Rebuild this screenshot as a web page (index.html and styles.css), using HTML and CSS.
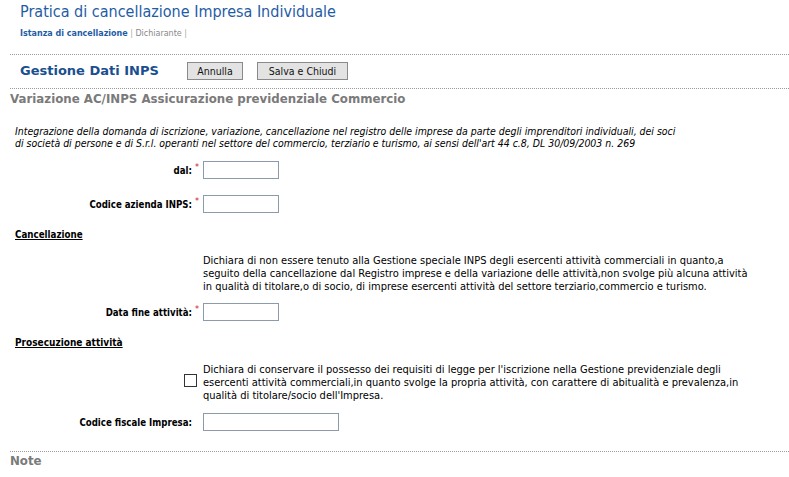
FILE: index.html
```html
<!DOCTYPE html>
<html lang="it">
<head>
<meta charset="utf-8">
<title>Pratica di cancellazione Impresa Individuale</title>
<link rel="stylesheet" href="styles.css">
</head>
<body>
<div class="page">
  <h1 class="title">Pratica di cancellazione Impresa Individuale</h1>
  <div class="crumbs"><a class="crumb-active">Istanza di cancellazione</a> <span class="sep">|</span> <span class="crumb">Dichiarante</span> <span class="sep">|</span></div>
  <div class="rule"></div>
  <div class="toolbar">
    <h2 class="section-title">Gestione Dati INPS</h2>
    <button class="btn btn-cancel">Annulla</button>
    <button class="btn btn-save">Salva e Chiudi</button>
  </div>
  <div class="rule rule-tight"></div>
  <h3 class="group-title">Variazione AC/INPS Assicurazione previdenziale Commercio</h3>

  <div class="form">
    <p class="intro">Integrazione della domanda di iscrizione, variazione, cancellazione nel registro delle imprese da parte degli imprenditori individuali, dei soci<br>di società di persone e di S.r.l. operanti nel settore del commercio, terziario e turismo, ai sensi dell'art 44 c.8, DL 30/09/2003 n. 269</p>

    <div class="row row-dal">
      <label class="lbl">dal:</label><span class="req">*</span>
      <input class="inp inp-short" type="text">
    </div>
    <div class="row row-cod">
      <label class="lbl">Codice azienda INPS:</label><span class="req">*</span>
      <input class="inp inp-short" type="text">
    </div>

    <h4 class="sub">Cancellazione</h4>
    <div class="row row-text1">
      <span class="lbl"></span><span class="req"></span>
      <p class="decl">Dichiara di non essere tenuto alla Gestione speciale INPS degli esercenti attività commerciali in quanto,a<br>seguito della cancellazione dal Registro imprese e della variazione delle attività,non svolge più alcuna attività<br>in qualità di titolare,o di socio, di imprese esercenti attività del settore terziario,commercio e turismo.</p>
    </div>
    <div class="row row-fine">
      <label class="lbl">Data fine attività:</label><span class="req">*</span>
      <input class="inp inp-short" type="text">
    </div>

    <h4 class="sub sub2">Prosecuzione attività</h4>
    <div class="row row-text2">
      <span class="chk-cell"><span class="chk"></span></span>
      <p class="decl">Dichiara di conservare il possesso dei requisiti di legge per l'iscrizione nella Gestione previdenziale degli<br>esercenti attività commerciali,in quanto svolge la propria attività, con carattere di abitualità e prevalenza,in<br>qualità di titolare/socio dell'Impresa.</p>
    </div>
    <div class="row row-cf">
      <label class="lbl">Codice fiscale Impresa:</label><span class="req"></span>
      <input class="inp inp-long" type="text">
    </div>
  </div>

  <div class="rule rule-note"></div>
  <h3 class="group-title note">Note</h3>
</div>
</body>
</html>
```
FILE: styles.css
```css
html, body {
  margin: 0;
  padding: 0;
  background: #fff;
}
body {
  font-family: "DejaVu Sans Condensed", "DejaVu Sans", Verdana, sans-serif;
  font-size: 11px;
  color: #000;
  overflow: hidden;
}
.page {
  padding: 2px 0 0 10px;
}
.title {
  margin: 0 0 0 10px;
  font-family: "DejaVu Sans Condensed", "DejaVu Sans", sans-serif;
  font-weight: normal;
  font-size: 16px;
  line-height: 20px;
  color: #1f5ca6;
}
.crumbs {
  margin: 5px 0 0 10px;
  font-family: "DejaVu Sans", sans-serif;
  font-size: 8px;
  line-height: 14px;
  color: #888;
}
.crumb-active {
  font-weight: bold;
  color: #1f5ca6;
}
.sep { color: #aaa; }
.rule {
  height: 0;
  border-top: 1px dotted #9a9a9a;
  margin-top: 13px;
}
.rule-tight {
  margin-top: 8px;
}
.toolbar {
  display: flex;
  align-items: center;
  height: 18px;
  margin: 7px 0 6px 10px;
}
.section-title {
  margin: 0;
  width: 167px;
  font-family: "DejaVu Sans", sans-serif;
  font-size: 13px;
  font-weight: bold;
  color: #1a4f8f;
  line-height: 18px;
}
.btn {
  height: 18px;
  padding: 0;
  border: 1px solid #8a8a8a;
  background: #e3e3e3;
  font-family: "DejaVu Sans Condensed", "DejaVu Sans", sans-serif;
  font-size: 10.5px;
  color: #111;
  line-height: 16px;
}
.btn-cancel { width: 56px; }
.btn-save { width: 91px; margin-left: 14px; }
.group-title {
  margin: 3px 0 0 0;
  font-family: "DejaVu Sans", sans-serif;
  font-size: 11.8px;
  font-weight: bold;
  color: #7a7a7a;
  line-height: 14px;
}
.form {
  padding-left: 5px;
}
.intro {
  margin: 19px 0 0 0;
  font-style: italic;
  font-size: 10.45px;
  line-height: 12px;
  white-space: nowrap;
}
.row {
  display: grid;
  grid-template-columns: 177px 11px auto;
  align-items: center;
  justify-items: start;
}
.lbl {
  justify-self: end;
  font-weight: bold;
  font-size: 9.6px;
}
.req {
  color: #d02020;
  font-size: 9px;
  padding-left: 3px;
  align-self: start;
  margin-top: 1px;
}
.inp {
  box-sizing: border-box;
  height: 18px;
  border: 1px solid #8c9aaa;
  padding: 0;
  margin: 0;
  background: #fff;
}
.inp-short { width: 76px; }
.inp-long { width: 136px; }
.row-dal { margin-top: 12px; }
.row-cod { margin-top: 16px; }
.sub {
  margin: 15px 0 0 0;
  font-size: 9.7px;
  font-weight: bold;
  text-decoration: underline;
  line-height: 14px;
}
.decl {
  margin: 0;
  font-size: 11px;
  line-height: 13px;
  white-space: nowrap;
}
.row-text1 { margin-top: 12px; }
.row-fine { margin-top: 10px; }
.sub2 { margin-top: 15px; font-size: 10px; }
.row-text2 { margin-top: 13px; }
.chk-cell {
  grid-column: 1 / span 2;
  justify-self: end;
  align-self: start;
  margin: 11px 6px 0 0;
}
.chk {
  display: block;
  box-sizing: border-box;
  width: 13px;
  height: 13px;
  border: 1px solid #333;
  background: #fff;
}
.row-cf { margin-top: 11px; }
.rule-note {
  margin-top: 20px;
}
.note {
  margin-top: 2px;
}
```
